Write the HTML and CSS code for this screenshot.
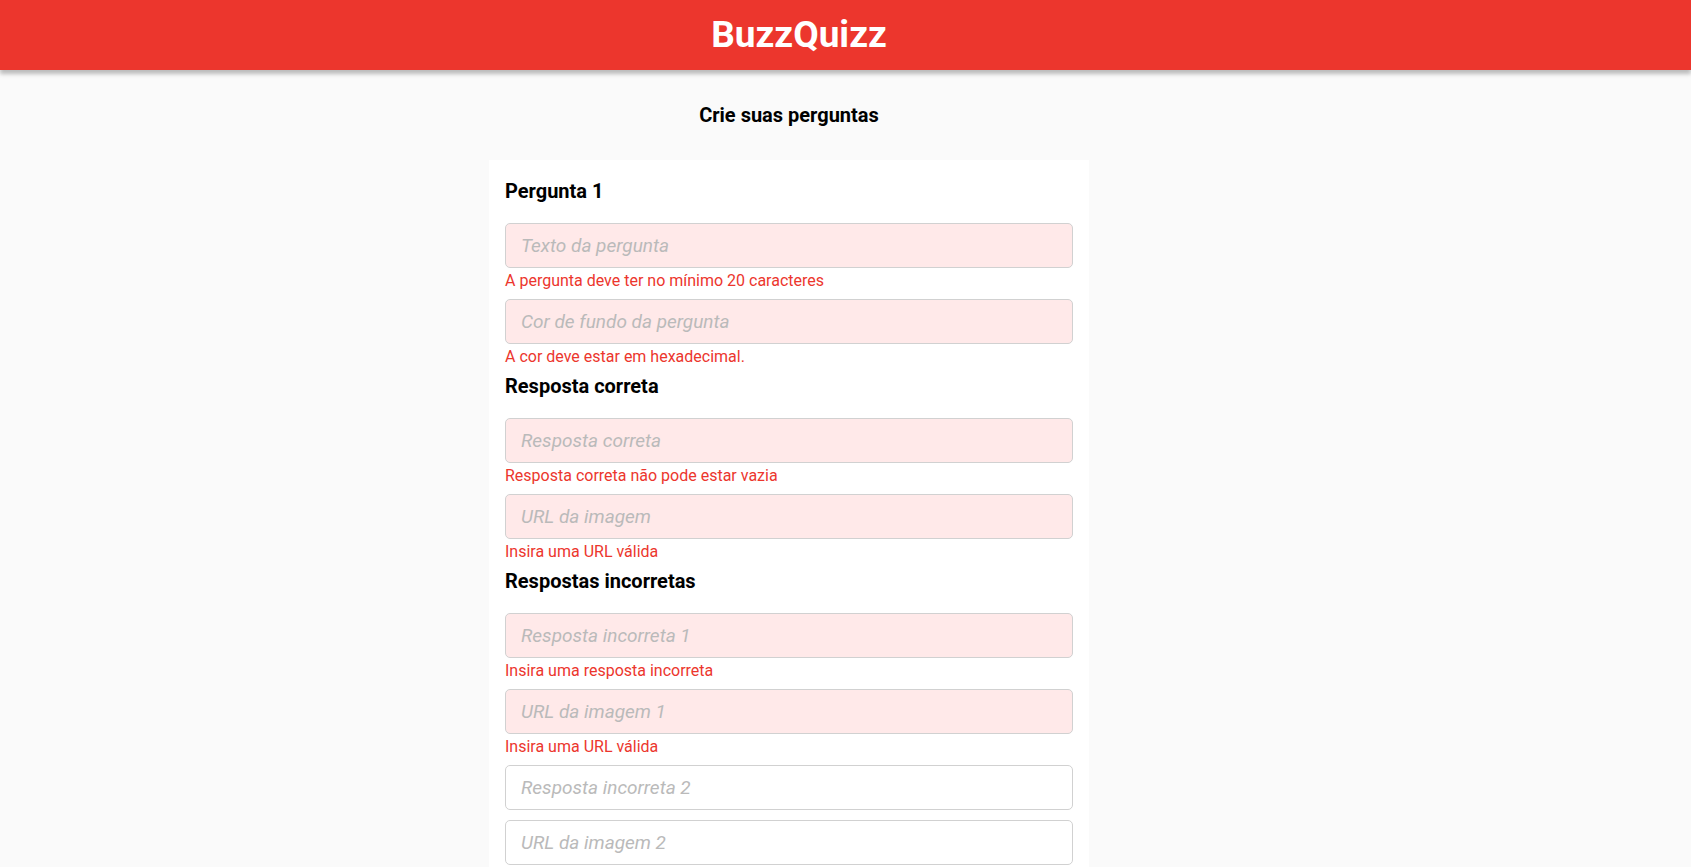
FILE: index.html
```html
<!DOCTYPE html>
<html lang="pt-BR">
<head>
<meta charset="utf-8">
<title>BuzzQuizz</title>
<link rel="stylesheet" href="styles.css">
</head>
<body>
<header class="topbar"><h1 class="brand">BuzzQuizz</h1></header>
<main class="main">
  <h2 class="page-title">Crie suas perguntas</h2>
  <section class="card">
    <h3 class="q-title">Pergunta 1</h3>
    <div class="field"><input class="input invalid" placeholder="Texto da pergunta"><p class="error">A pergunta deve ter no mínimo 20 caracteres</p></div>
    <div class="field"><input class="input invalid" placeholder="Cor de fundo da pergunta"><p class="error">A cor deve estar em hexadecimal.</p></div>
    <h4 class="section-title">Resposta correta</h4>
    <div class="field"><input class="input invalid" placeholder="Resposta correta"><p class="error">Resposta correta não pode estar vazia</p></div>
    <div class="field"><input class="input invalid" placeholder="URL da imagem"><p class="error">Insira uma URL válida</p></div>
    <h4 class="section-title">Respostas incorretas</h4>
    <div class="field"><input class="input invalid" placeholder="Resposta incorreta 1"><p class="error">Insira uma resposta incorreta</p></div>
    <div class="field"><input class="input invalid" placeholder="URL da imagem 1"><p class="error">Insira uma URL válida</p></div>
    <div class="field"><input class="input" placeholder="Resposta incorreta 2"></div>
    <div class="field"><input class="input" placeholder="URL da imagem 2"></div>
    <div class="field"><input class="input" placeholder="Resposta incorreta 3"></div>
    <div class="field"><input class="input" placeholder="URL da imagem 3"></div>
  </section>
</main>
</body>
</html>
```
FILE: styles.css
```css
* { box-sizing: border-box; }
body {
  margin: 0;
  background: #FAFAFA;
  font-family: Roboto, "Liberation Sans", sans-serif;
  color: #000;
}
.topbar {
  height: 70px;
  background: #EC362D;
  box-shadow: 0 4px 4px rgba(0,0,0,0.25);
  display: flex;
  align-items: center;
  justify-content: center;
  padding-right: 93px;
}
.brand {
  margin: 0;
  color: #fff;
  font-size: 37px;
  font-weight: 700;
  line-height: 44px;
}
.main {
  width: 600px;
  margin-left: 489px;
  padding-top: 34px;
}
.page-title {
  margin: 0 0 34px;
  text-align: center;
  font-size: 20px;
  font-weight: 700;
  line-height: 22px;
}
.card {
  background: #fff;
  padding: 19px 16px 20px;
}
.q-title {
  margin: 0 0 20px;
  font-size: 20px;
  font-weight: 700;
  line-height: 24px;
}
.section-title {
  margin: -1px 0 20px;
  font-size: 20px;
  font-weight: 700;
  line-height: 24px;
}
.field { display: flow-root; margin-bottom: 10px; }
.input {
  display: block;
  width: 100%;
  height: 45px;
  border: 1px solid #D1D1D1;
  border-radius: 5px;
  background: #fff;
  padding: 0 15px;
  font-family: Roboto, "Liberation Sans", sans-serif;
  font-size: 19px;
  outline: none;
}
.input::placeholder {
  color: #BABABA;
  font-style: italic;
}
.input.invalid { background: #FFE9E9; }
.error {
  margin: 4px 0 -1px;
  font-size: 16px;
  line-height: 18px;
  color: #EC362D;
}
```
